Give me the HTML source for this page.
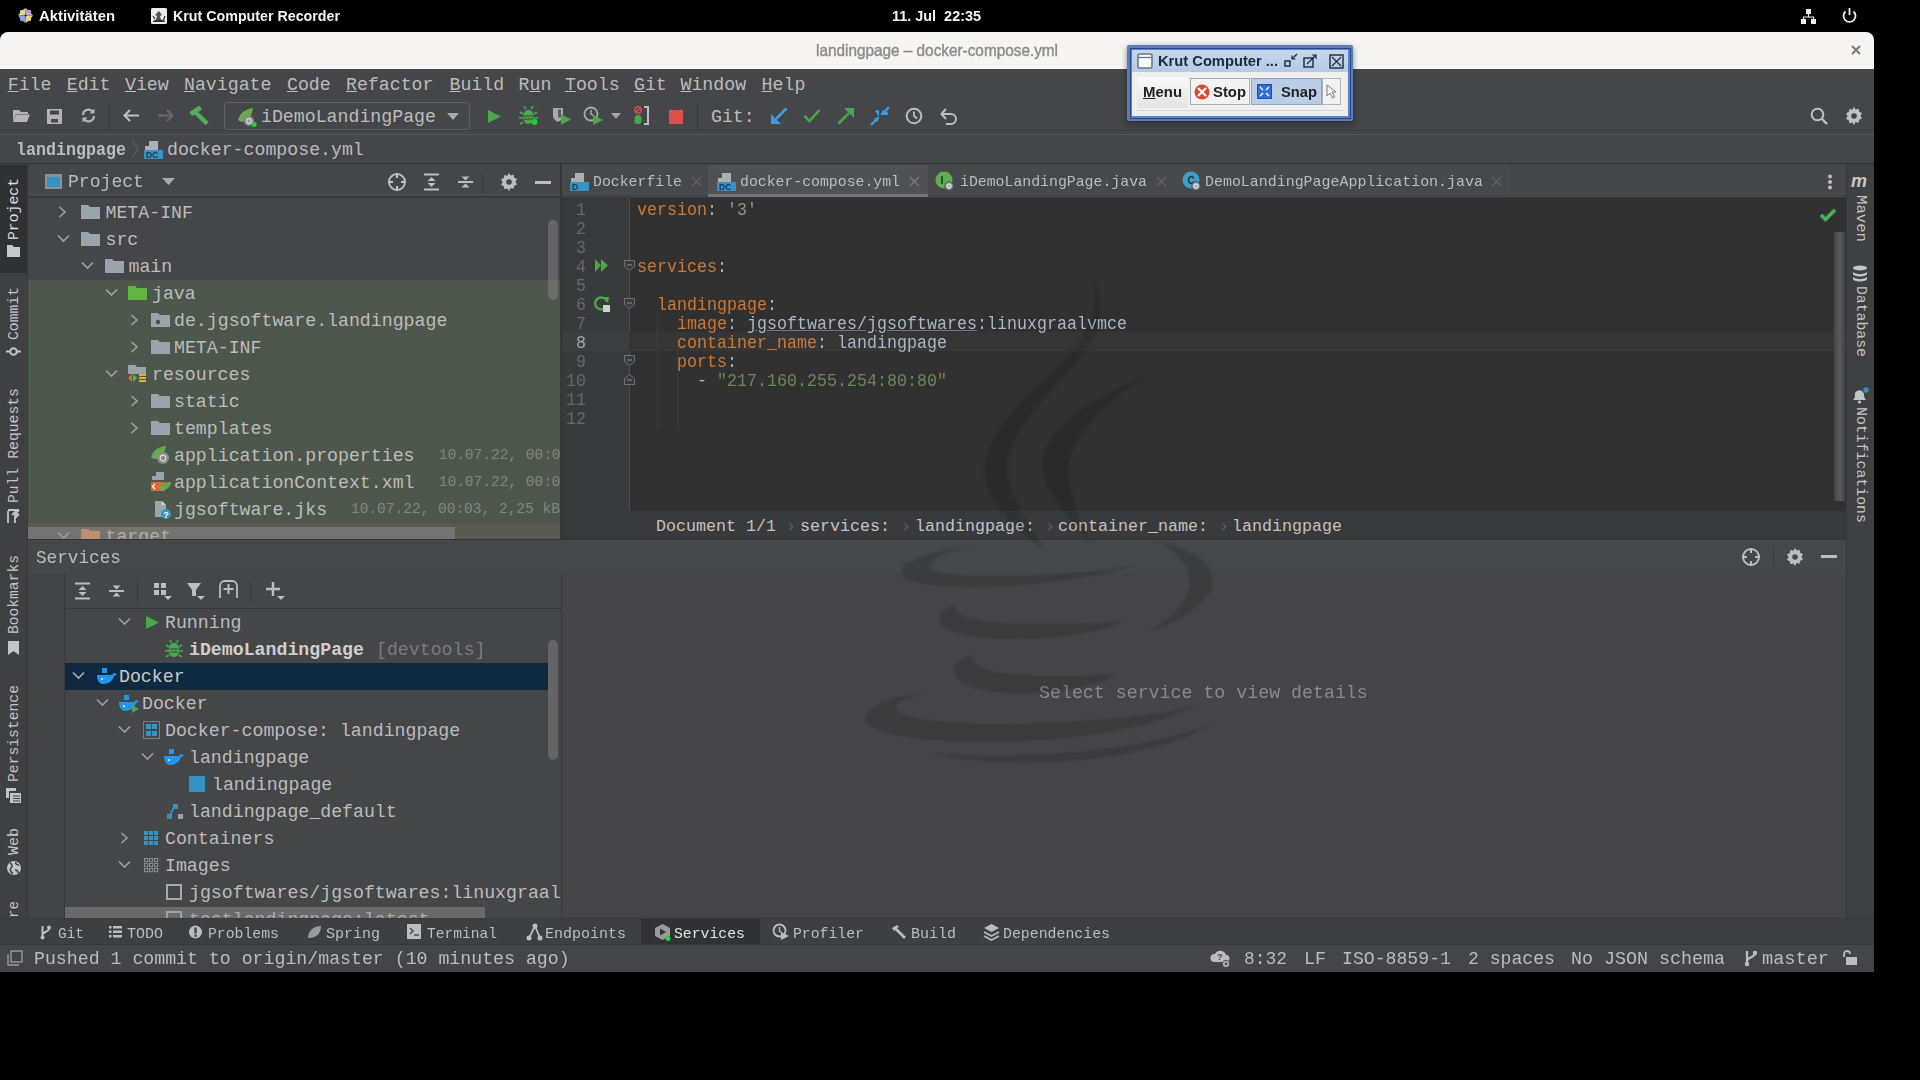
<!DOCTYPE html>
<html><head><meta charset="utf-8"><style>
html,body{margin:0;padding:0;}
body{width:1920px;height:1080px;background:#000;position:relative;overflow:hidden;font-family:"Liberation Mono",monospace;}
div{position:absolute;box-sizing:border-box;}
.t{white-space:pre;}
</style></head><body>
<div style="left:0px;top:0px;width:1920px;height:32px;background:#000;"></div>
<svg style="position:absolute;left:17px;top:7px;" width="17" height="17" viewBox="0 0 17 17"><g transform="translate(8.5 8.5)"><path d="M0.00 0.00 L0.00 -7.50 L2.37 -5.73 L5.30 -5.30 L5.73 -2.37 L7.50 0.00Z" fill="#c49ae0"/><path d="M0.00 0.00 L-7.50 0.00 L-5.73 -2.37 L-5.30 -5.30 L-2.37 -5.73 L-0.00 -7.50Z" fill="#d6dc80"/><path d="M0.00 0.00 L0.00 7.50 L-2.37 5.73 L-5.30 5.30 L-5.73 2.37 L-7.50 0.00Z" fill="#9a9ae6"/><path d="M0.00 0.00 L7.50 0.00 L5.73 2.37 L5.30 5.30 L2.37 5.73 L0.00 7.50Z" fill="#e6d672"/><circle r="0.9" fill="#000"/></g></svg>
<div class="t" style="left:39px;top:6.00px;font-size:15px;line-height:20px;color:#f2f2f2;font-family:'Liberation Sans', sans-serif;font-weight:bold;transform:scaleX(0.9912);transform-origin:0 0;">Aktivitäten</div>
<svg style="position:absolute;left:151px;top:8px;" width="16" height="16" viewBox="0 0 16 16"><rect x="0" y="0" width="16" height="16" rx="1.5" fill="#ececec"/><path d="M8 3l3 4-2 1 1 4H5l1-4-2-1Z" fill="#555"/><path d="M2 13c3-2 9-2 12 0v1H2Z" fill="#333"/><path d="M2 8l2 3M14 8l-1.5 4" stroke="#222" stroke-width="1.2"/></svg>
<div class="t" style="left:173px;top:6.00px;font-size:15px;line-height:20px;color:#f2f2f2;font-family:'Liberation Sans', sans-serif;font-weight:bold;transform:scaleX(0.9497);transform-origin:0 0;">Krut Computer Recorder</div>
<div class="t" style="left:892px;top:6.00px;font-size:15px;line-height:20px;color:#f2f2f2;font-family:'Liberation Sans', sans-serif;font-weight:bold;transform:scaleX(0.9616);transform-origin:0 0;">11. Jul  22:35</div>
<svg style="position:absolute;left:1800px;top:8px;" width="17" height="17" viewBox="0 0 17 17"><rect x="6" y="1" width="5" height="5" fill="#eee"/><rect x="1" y="11" width="5" height="5" fill="#eee"/><rect x="11" y="11" width="5" height="5" fill="#eee"/><path d="M8.5 6v3M3.5 11V9h10v2" stroke="#eee" stroke-width="1.2" fill="none"/></svg>
<svg style="position:absolute;left:1841px;top:7px;" width="17" height="17" viewBox="0 0 17 17"><path d="M4.5 4.5 A6 6 0 1 0 12.5 4.5" stroke="#eee" stroke-width="1.8" fill="none"/><path d="M8.5 1v7" stroke="#eee" stroke-width="1.8"/></svg>
<div style="left:0px;top:32px;width:1874px;height:37px;background:#f6f5f4;border-radius:8px 8px 0 0;"></div>
<div class="t" style="left:816px;top:39.50px;font-size:16.5px;line-height:21px;color:#8c8c8c;font-family:'Liberation Sans', sans-serif;-webkit-text-stroke:0.45px #8c8c8c;transform:scaleX(0.9291);transform-origin:0 0;">landingpage – docker-compose.yml</div>
<svg style="position:absolute;left:1851px;top:45px;" width="10" height="10" viewBox="0 0 10 10"><path d="M1 1L9 9M9 1L1 9" stroke="#7a7a7a" stroke-width="2"/></svg>
<div style="left:0px;top:69px;width:1874px;height:903px;background:#454649;"></div>
<div class="t" style="left:7.7px;top:73.00px;font-size:18.23px;line-height:24px;color:#bcbcbc;font-family:'Liberation Mono', monospace;"><u>F</u>ile</div>
<div class="t" style="left:66.7px;top:73.00px;font-size:18.23px;line-height:24px;color:#bcbcbc;font-family:'Liberation Mono', monospace;"><u>E</u>dit</div>
<div class="t" style="left:125px;top:73.00px;font-size:18.23px;line-height:24px;color:#bcbcbc;font-family:'Liberation Mono', monospace;"><u>V</u>iew</div>
<div class="t" style="left:184px;top:73.00px;font-size:18.23px;line-height:24px;color:#bcbcbc;font-family:'Liberation Mono', monospace;"><u>N</u>avigate</div>
<div class="t" style="left:287px;top:73.00px;font-size:18.23px;line-height:24px;color:#bcbcbc;font-family:'Liberation Mono', monospace;"><u>C</u>ode</div>
<div class="t" style="left:346px;top:73.00px;font-size:18.23px;line-height:24px;color:#bcbcbc;font-family:'Liberation Mono', monospace;"><u>R</u>efactor</div>
<div class="t" style="left:449.5px;top:73.00px;font-size:18.23px;line-height:24px;color:#bcbcbc;font-family:'Liberation Mono', monospace;"><u>B</u>uild</div>
<div class="t" style="left:518.6px;top:73.00px;font-size:18.23px;line-height:24px;color:#bcbcbc;font-family:'Liberation Mono', monospace;">R<u>u</u>n</div>
<div class="t" style="left:565px;top:73.00px;font-size:18.23px;line-height:24px;color:#bcbcbc;font-family:'Liberation Mono', monospace;"><u>T</u>ools</div>
<div class="t" style="left:634px;top:73.00px;font-size:18.23px;line-height:24px;color:#bcbcbc;font-family:'Liberation Mono', monospace;"><u>G</u>it</div>
<div class="t" style="left:680.5px;top:73.00px;font-size:18.23px;line-height:24px;color:#bcbcbc;font-family:'Liberation Mono', monospace;"><u>W</u>indow</div>
<div class="t" style="left:761.6px;top:73.00px;font-size:18.23px;line-height:24px;color:#bcbcbc;font-family:'Liberation Mono', monospace;"><u>H</u>elp</div>
<div style="left:0px;top:130px;width:1874px;height:1px;background:#3b3c3e;"></div>
<div style="left:0px;top:134px;width:1874px;height:1px;background:#535456;"></div>
<div style="left:0px;top:163px;width:1874px;height:2px;background:#323335;"></div>
<svg style="position:absolute;left:12px;top:108px;" width="19" height="15" viewBox="0 0 19 15"><path d="M1 2h6l2 2h7v2H4L1 13Z" fill="#b4b4b4"/><path d="M4 6.5h14l-3 7.5H1Z" fill="#b4b4b4"/></svg>
<svg style="position:absolute;left:46px;top:108px;" width="17" height="16" viewBox="0 0 17 16"><path d="M1 1h15v15H1Z" fill="#b4b4b4"/><rect x="4" y="2.5" width="9" height="4" fill="#454649"/><rect x="5" y="11" width="7" height="3.5" fill="#454649"/></svg>
<svg style="position:absolute;left:80px;top:107px;" width="17" height="17" viewBox="0 0 17 17"><path d="M3 8a5.5 5.5 0 0 1 10-3M14 9a5.5 5.5 0 0 1-10 3" stroke="#b4b4b4" stroke-width="2.2" fill="none"/><path d="M14.5 1.5v5h-5Z M2.5 15.5v-5h5Z" fill="#b4b4b4"/></svg>
<div style="left:109px;top:104px;width:1px;height:26px;background:#3a3b3d;"></div>
<svg style="position:absolute;left:122px;top:108px;" width="18" height="15" viewBox="0 0 18 15"><path d="M17 7.5H3M8 2L2.5 7.5L8 13" stroke="#c0c0c0" stroke-width="2" fill="none"/></svg>
<svg style="position:absolute;left:157px;top:108px;" width="18" height="15" viewBox="0 0 18 15"><path d="M1 7.5h14M10 2l5.5 5.5L10 13" stroke="#6a6b6d" stroke-width="2" fill="none"/></svg>
<svg style="position:absolute;left:188px;top:104px;" width="22" height="22" viewBox="0 0 22 22"><path d="M2.8 10L12.6 3.5" stroke="#55ad5e" stroke-width="4.6"/><path d="M7 8L19.2 19.6" stroke="#55ad5e" stroke-width="4.4"/></svg>
<div style="left:224px;top:102px;width:246px;height:28px;background:transparent;border:1.5px solid #606163;border-radius:4px;"></div>
<svg style="position:absolute;left:236px;top:106px;" width="22" height="21" viewBox="0 0 22 21"><path d="M2 14c2-7 7-11 15-12-1 8-5 13-12 14Z" fill="#6aa84f"/><circle cx="13" cy="15" r="5" fill="#8c8c8c"/><circle cx="13" cy="15" r="2.3" fill="none" stroke="#ddd" stroke-width="1.2"/><circle cx="18" cy="18.5" r="2.5" fill="#25d03d"/></svg>
<div class="t" style="left:261px;top:105.00px;font-size:18.23px;line-height:24px;color:#bcbcbc;font-family:'Liberation Mono', monospace;">iDemoLandingPage</div>
<svg style="position:absolute;left:447px;top:113px;" width="12" height="7" viewBox="0 0 12 7"><path d="M0 0h12L6 7Z" fill="#a9a9a9"/></svg>
<svg style="position:absolute;left:487px;top:109px;" width="14" height="15" viewBox="0 0 14 15"><path d="M1 1l13 6.5L1 14Z" fill="#4aa74e"/></svg>
<svg style="position:absolute;left:519px;top:106px;" width="19" height="19" viewBox="0 0 19 19"><path d="M9.5 4a5 5 0 0 1 5 5v4a5 5 0 0 1-10 0V9a5 5 0 0 1 5-5Z" fill="#4aa74e"/><path d="M4 8l-3-2M15 8l3-2M4 12H0M15 12h4M4 16l-3 2M15 16l3 2M7 3L5 0M12 3l2-3" stroke="#4aa74e" stroke-width="1.6"/><path d="M5 10h9M5 13h9" stroke="#3c3c3c" stroke-width="1.2"/><circle cx="15.5" cy="16" r="3" fill="#22c93a"/></svg>
<svg style="position:absolute;left:551px;top:106px;" width="21" height="19" viewBox="0 0 21 19"><path d="M2 2h10v7c0 4-3 6-5 7-2-1-5-3-5-7Z" fill="#a9a9a9"/><path d="M7 3.5h3v8H7Z" fill="#5a5a5a"/><path d="M10 8l10 5.5L10 19Z" fill="#4aa74e"/></svg>
<svg style="position:absolute;left:583px;top:106px;" width="21" height="19" viewBox="0 0 21 19"><circle cx="8" cy="8" r="6.5" stroke="#a9a9a9" stroke-width="1.8" fill="none"/><path d="M8 4v4l3 2" stroke="#a9a9a9" stroke-width="1.5" fill="none"/><path d="M10 9l10 5L10 19Z" fill="#4aa74e"/></svg>
<svg style="position:absolute;left:611px;top:113px;" width="10" height="6" viewBox="0 0 10 6"><path d="M0 0h10L5 6Z" fill="#a9a9a9"/></svg>
<svg style="position:absolute;left:633px;top:106px;" width="18" height="19" viewBox="0 0 18 19"><circle cx="5" cy="4" r="3.3" stroke="#e05252" stroke-width="1.3" fill="none"/><path d="M2.5 6.5L7.5 1.5" stroke="#e05252" stroke-width="1.2"/><path d="M5 9a3.5 3.5 0 0 1 3.5 3.5v2a3.5 3.5 0 0 1-7 0v-2A3.5 3.5 0 0 1 5 9Z" fill="#4aa74e"/><path d="M11 1h4v17h-4" stroke="#bdbdbd" stroke-width="2" fill="none"/></svg>
<svg style="position:absolute;left:669px;top:110px;" width="14" height="14" viewBox="0 0 14 14"><rect width="14" height="14" fill="#e04f4f"/></svg>
<div style="left:697px;top:104px;width:1px;height:26px;background:#3a3b3d;"></div>
<div class="t" style="left:711px;top:105.00px;font-size:18.23px;line-height:24px;color:#bcbcbc;font-family:'Liberation Mono', monospace;">Git:</div>
<svg style="position:absolute;left:770px;top:107px;" width="18" height="18" viewBox="0 0 18 18"><path d="M16.5 1.5L6 12" stroke="#3a9de0" stroke-width="2.6"/><path d="M1 17V7l10 10Z" fill="#3a9de0"/></svg>
<svg style="position:absolute;left:803px;top:108px;" width="18" height="15" viewBox="0 0 18 15"><path d="M1.5 8l5 5L16.5 2" stroke="#4aa74e" stroke-width="2.6" fill="none"/></svg>
<svg style="position:absolute;left:837px;top:107px;" width="18" height="18" viewBox="0 0 18 18"><path d="M1.5 16.5L12 6" stroke="#4aa74e" stroke-width="2.6"/><path d="M17 1v10L7 1Z" fill="#4aa74e"/></svg>
<svg style="position:absolute;left:870px;top:106px;" width="20" height="20" viewBox="0 0 20 20"><path d="M19 1l-6 6M1 19l6-6" stroke="#3a9de0" stroke-width="2.4"/><path d="M9 11V4l-4 .5Z M11 9h7l-.5-4Z" fill="#3a9de0"/><path d="M9.5 10.5L4 12.5 7.5 16Z M10.5 9.5l2-5.5L16 7.5Z" fill="#3a9de0"/></svg>
<svg style="position:absolute;left:905px;top:107px;" width="18" height="18" viewBox="0 0 18 18"><circle cx="9" cy="9" r="7.3" stroke="#bdbdbd" stroke-width="2" fill="none"/><path d="M9 4.5V9l3 2.5" stroke="#bdbdbd" stroke-width="1.8" fill="none"/></svg>
<svg style="position:absolute;left:940px;top:107px;" width="18" height="18" viewBox="0 0 18 18"><path d="M2 7h9a5 5 0 0 1 0 10H6" stroke="#bdbdbd" stroke-width="2" fill="none"/><path d="M6 2L1.5 7L6 12" stroke="#bdbdbd" stroke-width="2" fill="none"/></svg>
<svg style="position:absolute;left:1810px;top:107px;" width="18" height="18" viewBox="0 0 18 18"><circle cx="7.5" cy="7.5" r="5.8" stroke="#c0c0c0" stroke-width="2" fill="none"/><path d="M11.5 11.5L17 17" stroke="#c0c0c0" stroke-width="2.4"/></svg>
<svg style="position:absolute;left:1845px;top:107px;" width="18" height="18" viewBox="0 0 18 18"><path d="M9 0l1.6 2.6 3-.8.6 3 2.8 1.3-1.5 2.7 1.5 2.7-2.8 1.3-.6 3-3-.8L9 18l-1.6-2.6-3 .8-.6-3L1 11.9 2.5 9 1 6.3l2.8-1.3.6-3 3 .8Z" fill="#c0c0c0"/><circle cx="9" cy="9" r="2.8" fill="#454649"/></svg>
<div class="t" style="left:15.5px;top:138.00px;font-size:18.23px;line-height:24px;color:#bcbcbc;font-family:'Liberation Mono', monospace;font-weight:bold;transform:scaleX(0.9140);transform-origin:0 0;">landingpage</div>
<svg style="position:absolute;left:131px;top:139px;" width="8" height="20" viewBox="0 0 8 20"><path d="M1 1l6 9-6 9" stroke="#5a5b5d" stroke-width="1.2" fill="none"/></svg>
<svg style="position:absolute;left:144px;top:140px;" width="19" height="19" viewBox="0 0 19 19"><path d="M5 1h9v9H5Z" fill="#a9b1b7"/><path d="M1 6h6v4H1Z" fill="#a9b1b7"/><rect x="0" y="10" width="19" height="9" fill="#3592c4"/><text x="2" y="18" font-family="Liberation Sans" font-size="8.5" font-weight="bold" fill="#1d3d55">DC</text></svg>
<div class="t" style="left:167px;top:138.00px;font-size:18.23px;line-height:24px;color:#bcbcbc;font-family:'Liberation Mono', monospace;">docker-compose.yml</div>
<div style="left:0px;top:164px;width:28px;height:781px;background:#3e4042;"></div>
<div style="left:27px;top:164px;width:1px;height:781px;background:#38393b;"></div>
<div style="left:0px;top:165px;width:27px;height:108px;background:#2f3133;"></div>
<div class="t" style="left:13.5px;top:240px;font-size:14.8px;line-height:19px;color:#dedede;font-family:'Liberation Mono',monospace;transform-origin:0 0;transform:rotate(-90deg) scaleX(0.9972) translateY(-9.5px);">Project</div>
<svg style="position:absolute;left:6px;top:244px;" width="15" height="14" viewBox="0 0 15 14"><path d="M1 1h5l2 2h6v10H1Z" fill="#c8c8c8"/></svg>
<div class="t" style="left:13.5px;top:340px;font-size:14.8px;line-height:19px;color:#c4c4c4;font-family:'Liberation Mono',monospace;transform-origin:0 0;transform:rotate(-90deg) scaleX(0.9945) translateY(-9.5px);">Commit</div>
<svg style="position:absolute;left:6px;top:345px;" width="15" height="13" viewBox="0 0 15 13"><circle cx="7.5" cy="6.5" r="3.3" stroke="#c4c4c4" stroke-width="2" fill="none"/><path d="M0 6.5h4M11 6.5h4" stroke="#c4c4c4" stroke-width="2"/></svg>
<div class="t" style="left:13.5px;top:503px;font-size:14.8px;line-height:19px;color:#c4c4c4;font-family:'Liberation Mono',monospace;transform-origin:0 0;transform:rotate(-90deg) scaleX(0.9959) translateY(-9.5px);">Pull Requests</div>
<svg style="position:absolute;left:6px;top:509px;" width="15" height="15" viewBox="0 0 15 15"><path d="M2 14V2M2 1h11M9 5l4-4M9 9l4-4-4 4" stroke="#c4c4c4" stroke-width="1.8" fill="none"/><path d="M6 6l3-3 3 3M9 3v11" stroke="#c4c4c4" stroke-width="1.8" fill="none"/></svg>
<div class="t" style="left:13.5px;top:634px;font-size:14.8px;line-height:19px;color:#c4c4c4;font-family:'Liberation Mono',monospace;transform-origin:0 0;transform:rotate(-90deg) scaleX(0.9882) translateY(-9.5px);">Bookmarks</div>
<svg style="position:absolute;left:7px;top:640px;" width="13" height="16" viewBox="0 0 13 16"><path d="M1 1h11v14l-5.5-4L1 15Z" fill="#c4c4c4"/></svg>
<div class="t" style="left:13.5px;top:782px;font-size:14.8px;line-height:19px;color:#c4c4c4;font-family:'Liberation Mono',monospace;transform-origin:0 0;transform:rotate(-90deg) scaleX(0.9928) translateY(-9.5px);">Persistence</div>
<svg style="position:absolute;left:5px;top:787px;" width="17" height="17" viewBox="0 0 17 17"><path d="M1 1h10v3H4v7H1Z" fill="#c4c4c4"/><path d="M5 6h11v10H5Z" fill="#c4c4c4"/><path d="M8 9h7M8 11.5h7M8 14h7" stroke="#3e4042" stroke-width="1"/></svg>
<div class="t" style="left:13.5px;top:855px;font-size:14.8px;line-height:19px;color:#c4c4c4;font-family:'Liberation Mono',monospace;transform-origin:0 0;transform:rotate(-90deg) scaleX(1.0132) translateY(-9.5px);">Web</div>
<svg style="position:absolute;left:6px;top:860px;" width="16" height="16" viewBox="0 0 16 16"><circle cx="8" cy="8" r="7" fill="#c4c4c4"/><path d="M4 3c2 1 3 3 1 5s0 4 2 6M10 2c-1 2 1 3 3 3M9 10c2 0 3 1 3 3" stroke="#3e4042" stroke-width="1.6" fill="none"/></svg>
<div class="t" style="left:13.5px;top:918px;font-size:14.8px;line-height:19px;color:#c4c4c4;font-family:'Liberation Mono',monospace;transform-origin:0 0;transform:rotate(-90deg) scaleX(0.9570) translateY(-9.5px);">re</div>
<div style="left:1846px;top:164px;width:28px;height:781px;background:#3e4042;"></div>
<div style="left:1846px;top:164px;width:1px;height:781px;background:#38393b;"></div>
<div class="t" style="left:1851px;top:170px;font-size:18px;line-height:22px;color:#c8c8c8;font-family:'Liberation Sans',sans-serif;font-weight:bold;font-style:italic;">m</div>
<div class="t" style="left:1860px;top:195px;font-size:14.8px;line-height:19px;color:#c4c4c4;font-family:'Liberation Mono',monospace;transform-origin:0 0;transform:rotate(90deg) scaleX(1.0583) translateY(-9.5px);">Maven</div>
<svg style="position:absolute;left:1852px;top:265px;" width="16" height="18" viewBox="0 0 16 18"><ellipse cx="8" cy="3" rx="7" ry="2.5" fill="#c4c4c4"/><path d="M1 6.5c0 3.3 14 3.3 14 0v2.5c0 3.3-14 3.3-14 0Z M1 11.5c0 3.3 14 3.3 14 0v2.5c0 3.3-14 3.3-14 0Z" fill="#c4c4c4"/></svg>
<div class="t" style="left:1860px;top:286px;font-size:14.8px;line-height:19px;color:#c4c4c4;font-family:'Liberation Mono',monospace;transform-origin:0 0;transform:rotate(90deg) scaleX(0.9992) translateY(-9.5px);">Database</div>
<svg style="position:absolute;left:1851px;top:386px;" width="19" height="18" viewBox="0 0 19 18"><path d="M2 14c2-2 2-4 2-7a5 5 0 0 1 9 0c0 3 0 5 2 7Z" fill="#c4c4c4"/><circle cx="8.5" cy="16" r="1.6" fill="#c4c4c4"/><circle cx="15" cy="4" r="3.3" fill="#3592c4" stroke="#3e4042" stroke-width="1"/></svg>
<div class="t" style="left:1860px;top:407px;font-size:14.8px;line-height:19px;color:#c4c4c4;font-family:'Liberation Mono',monospace;transform-origin:0 0;transform:rotate(90deg) scaleX(1.0046) translateY(-9.5px);">Notifications</div>
<div style="left:28px;top:164px;width:533px;height:375px;background:#454649;"></div>
<div style="left:28px;top:194px;width:533px;height:1px;background:#4c4d4f;"></div>
<div style="left:28px;top:196px;width:533px;height:2px;background:#38393a;"></div>
<svg style="position:absolute;left:44px;top:173px;" width="19" height="17" viewBox="0 0 19 17"><rect x="1" y="1" width="17" height="15" fill="#8a9095"/><rect x="3" y="4" width="13" height="10" fill="#3592c4"/></svg>
<div class="t" style="left:68px;top:170.00px;font-size:18.23px;line-height:24px;color:#bcbcbc;font-family:'Liberation Mono', monospace;transform:scaleX(0.9923);transform-origin:0 0;">Project</div>
<svg style="position:absolute;left:162px;top:178px;" width="13" height="7" viewBox="0 0 13 7"><path d="M0 0h13L6.5 7Z" fill="#a9a9a9"/></svg>
<svg style="position:absolute;left:387px;top:172px;" width="20" height="20" viewBox="0 0 20 20"><circle cx="10" cy="10" r="8" stroke="#bdbdbd" stroke-width="2" fill="none"/><path d="M10 1v5M10 14v5M1 10h5M14 10h5" stroke="#bdbdbd" stroke-width="2"/></svg>
<svg style="position:absolute;left:423px;top:173px;" width="17" height="18" viewBox="0 0 17 18"><path d="M1 1.5h15M1 16.5h15" stroke="#bdbdbd" stroke-width="2"/><path d="M8.5 4l4 4h-8Z M8.5 14l4-4h-8Z" fill="#bdbdbd"/></svg>
<svg style="position:absolute;left:457px;top:173px;" width="17" height="18" viewBox="0 0 17 18"><path d="M1 9h15" stroke="#bdbdbd" stroke-width="2"/><path d="M8.5 7.5l4-4h-8Z M8.5 10.5l4 4h-8Z" fill="#bdbdbd"/></svg>
<div style="left:482px;top:172px;width:1px;height:21px;background:#3a3b3d;"></div>
<svg style="position:absolute;left:500px;top:173px;" width="18" height="18" viewBox="0 0 18 18"><path d="M9 0l1.6 2.6 3-.8.6 3 2.8 1.3-1.5 2.7 1.5 2.7-2.8 1.3-.6 3-3-.8L9 18l-1.6-2.6-3 .8-.6-3L1 11.9 2.5 9 1 6.3l2.8-1.3.6-3 3 .8Z" fill="#bdbdbd"/><circle cx="9" cy="9" r="2.8" fill="#454649"/></svg>
<div style="left:535px;top:181px;width:16px;height:2.5px;background:#bdbdbd;"></div>
<div style="left:28px;top:279.5px;width:532px;height:244px;background:#4e574c;"></div>
<div style="left:28px;top:523px;width:532px;height:16px;background:#5b5850;"></div>
<svg style="position:absolute;left:58px;top:205.8px;" width="9" height="12" viewBox="0 0 9 12"><path d="M1.5 1l5.5 5-5.5 5" stroke="#a0a0a0" stroke-width="1.6" fill="none"/></svg>
<svg style="position:absolute;left:81px;top:203.8px;" width="19" height="16" viewBox="0 0 19 16"><path d="M0 1h7l2 2h10v12H0Z" fill="#9aa4ad"/></svg>
<div class="t" style="left:105.5px;top:200.80px;font-size:18.23px;line-height:24px;color:#bcbcbc;font-family:'Liberation Mono', monospace;">META-INF</div>
<svg style="position:absolute;left:57px;top:233.8px;" width="13" height="9" viewBox="0 0 13 9"><path d="M1 1.5l5.5 5.5 5.5-5.5" stroke="#a0a0a0" stroke-width="1.6" fill="none"/></svg>
<svg style="position:absolute;left:81px;top:230.8px;" width="19" height="16" viewBox="0 0 19 16"><path d="M0 1h7l2 2h10v12H0Z" fill="#9aa4ad"/></svg>
<div class="t" style="left:105.5px;top:227.80px;font-size:18.23px;line-height:24px;color:#bcbcbc;font-family:'Liberation Mono', monospace;">src</div>
<svg style="position:absolute;left:81px;top:260.8px;" width="13" height="9" viewBox="0 0 13 9"><path d="M1 1.5l5.5 5.5 5.5-5.5" stroke="#a0a0a0" stroke-width="1.6" fill="none"/></svg>
<svg style="position:absolute;left:105px;top:257.8px;" width="19" height="16" viewBox="0 0 19 16"><path d="M0 1h7l2 2h10v12H0Z" fill="#9aa4ad"/></svg>
<div class="t" style="left:128.5px;top:254.80px;font-size:18.23px;line-height:24px;color:#bcbcbc;font-family:'Liberation Mono', monospace;">main</div>
<svg style="position:absolute;left:104.6px;top:287.8px;" width="13" height="9" viewBox="0 0 13 9"><path d="M1 1.5l5.5 5.5 5.5-5.5" stroke="#a0a0a0" stroke-width="1.6" fill="none"/></svg>
<svg style="position:absolute;left:128px;top:284.8px;" width="19" height="16" viewBox="0 0 19 16"><path d="M0 1h7l2 2h10v12H0Z" fill="#62b543"/></svg>
<div class="t" style="left:152px;top:281.80px;font-size:18.23px;line-height:24px;color:#bcbcbc;font-family:'Liberation Mono', monospace;">java</div>
<svg style="position:absolute;left:129.7px;top:313.8px;" width="9" height="12" viewBox="0 0 9 12"><path d="M1.5 1l5.5 5-5.5 5" stroke="#a0a0a0" stroke-width="1.6" fill="none"/></svg>
<svg style="position:absolute;left:151px;top:311.8px;" width="19" height="16" viewBox="0 0 19 16"><path d="M0 1h7l2 2h10v12H0Z" fill="#9aa4ad"/><circle cx="7" cy="10" r="2.2" fill="#4b4f52"/></svg>
<div class="t" style="left:174px;top:308.80px;font-size:18.23px;line-height:24px;color:#bcbcbc;font-family:'Liberation Mono', monospace;">de.jgsoftware.landingpage</div>
<svg style="position:absolute;left:129.7px;top:340.8px;" width="9" height="12" viewBox="0 0 9 12"><path d="M1.5 1l5.5 5-5.5 5" stroke="#a0a0a0" stroke-width="1.6" fill="none"/></svg>
<svg style="position:absolute;left:151px;top:338.8px;" width="19" height="16" viewBox="0 0 19 16"><path d="M0 1h7l2 2h10v12H0Z" fill="#9aa4ad"/></svg>
<div class="t" style="left:174px;top:335.80px;font-size:18.23px;line-height:24px;color:#bcbcbc;font-family:'Liberation Mono', monospace;">META-INF</div>
<svg style="position:absolute;left:104.6px;top:368.8px;" width="13" height="9" viewBox="0 0 13 9"><path d="M1 1.5l5.5 5.5 5.5-5.5" stroke="#a0a0a0" stroke-width="1.6" fill="none"/></svg>
<svg style="position:absolute;left:127px;top:363.8px;" width="21" height="20" viewBox="0 0 21 20"><path d="M1 1h7l2 2h9v7H1Z" fill="#9aa4ad"/><path d="M1 14l4-4v8Z" fill="#e5663b"/><path d="M6 10l4 4-4 4Z" fill="#62b543"/><path d="M12 11h7M12 14h7M12 17h7" stroke="#e0b234" stroke-width="1.8"/></svg>
<div class="t" style="left:152px;top:362.80px;font-size:18.23px;line-height:24px;color:#bcbcbc;font-family:'Liberation Mono', monospace;">resources</div>
<svg style="position:absolute;left:129.7px;top:394.8px;" width="9" height="12" viewBox="0 0 9 12"><path d="M1.5 1l5.5 5-5.5 5" stroke="#a0a0a0" stroke-width="1.6" fill="none"/></svg>
<svg style="position:absolute;left:151px;top:392.8px;" width="19" height="16" viewBox="0 0 19 16"><path d="M0 1h7l2 2h10v12H0Z" fill="#9aa4ad"/></svg>
<div class="t" style="left:174px;top:389.80px;font-size:18.23px;line-height:24px;color:#bcbcbc;font-family:'Liberation Mono', monospace;">static</div>
<svg style="position:absolute;left:129.7px;top:421.8px;" width="9" height="12" viewBox="0 0 9 12"><path d="M1.5 1l5.5 5-5.5 5" stroke="#a0a0a0" stroke-width="1.6" fill="none"/></svg>
<svg style="position:absolute;left:151px;top:419.8px;" width="19" height="16" viewBox="0 0 19 16"><path d="M0 1h7l2 2h10v12H0Z" fill="#9aa4ad"/></svg>
<div class="t" style="left:174px;top:416.80px;font-size:18.23px;line-height:24px;color:#bcbcbc;font-family:'Liberation Mono', monospace;">templates</div>
<svg style="position:absolute;left:150px;top:444.8px;" width="22" height="20" viewBox="0 0 22 20"><path d="M1 12c2-6 6-10 15-11-1 7-5 12-12 13Z" fill="#6aa84f"/><circle cx="13" cy="13" r="6" fill="#8c8c8c"/><circle cx="13" cy="13" r="2.8" fill="none" stroke="#ddd" stroke-width="1.2"/></svg>
<div class="t" style="left:174px;top:443.80px;font-size:18.23px;line-height:24px;color:#bcbcbc;font-family:'Liberation Mono', monospace;">application.properties</div>
<svg style="position:absolute;left:150px;top:470.8px;" width="22" height="22" viewBox="0 0 22 22"><path d="M6 1h8v8H6Z M2 5h5v4H2Z" fill="#9aa4ad"/><rect x="1" y="11" width="14" height="9" fill="#e5663b"/><path d="M5 13l-2.5 2.5L5 18" stroke="#fff" stroke-width="1.2" fill="none"/><path d="M9 19c1-6 5-8 12-8-1 6-5 9-12 8Z" fill="#6aa84f"/></svg>
<div class="t" style="left:174px;top:470.80px;font-size:18.23px;line-height:24px;color:#bcbcbc;font-family:'Liberation Mono', monospace;">applicationContext.xml</div>
<svg style="position:absolute;left:151px;top:497.8px;" width="22" height="22" viewBox="0 0 22 22"><path d="M4 3h7v4h4v12H4Z" fill="#9aa4ad"/><path d="M11 3l4 4h-4Z" fill="#d0d6db"/><circle cx="15" cy="16" r="5" fill="#3592c4"/><text x="12.3" y="20" font-family="Liberation Sans" font-size="9" font-weight="bold" fill="#fff">?</text></svg>
<div class="t" style="left:174px;top:497.80px;font-size:18.23px;line-height:24px;color:#bcbcbc;font-family:'Liberation Mono', monospace;">jgsoftware.jks</div>
<svg style="position:absolute;left:57px;top:530.8px;" width="13" height="9" viewBox="0 0 13 9"><path d="M1 1.5l5.5 5.5 5.5-5.5" stroke="#a0a0a0" stroke-width="1.6" fill="none"/></svg>
<svg style="position:absolute;left:81px;top:527.8px;" width="19" height="16" viewBox="0 0 19 16"><path d="M0 1h7l2 2h10v12H0Z" fill="#e0874d"/></svg>
<div class="t" style="left:105.5px;top:524.80px;font-size:18.23px;line-height:24px;color:#c9c0b0;font-family:'Liberation Mono', monospace;">target</div>
<div class="t" style="left:438.75px;top:446.30px;font-size:14.5px;line-height:19px;color:#80867e;font-family:'Liberation Mono', monospace;">10.07.22, 00:0</div>
<div class="t" style="left:438.75px;top:473.30px;font-size:14.5px;line-height:19px;color:#80867e;font-family:'Liberation Mono', monospace;">10.07.22, 00:0</div>
<div class="t" style="left:351px;top:500.30px;font-size:14.5px;line-height:19px;color:#80867e;font-family:'Liberation Mono', monospace;">10.07.22, 00:03, 2,25 kB</div>
<div style="left:28px;top:527px;width:427px;height:12px;background:rgba(150,150,150,0.45);"></div>
<div style="left:548px;top:220px;width:10px;height:80px;background:rgba(140,140,140,0.45);border-radius:5px;"></div>
<div style="left:560px;top:164px;width:2px;height:375px;background:#38393b;"></div>
<div style="left:561px;top:164px;width:1285px;height:34px;background:#454649;"></div>
<div style="left:562px;top:165px;width:947px;height:29px;background:#47484a;"></div>
<div style="left:562px;top:193px;width:1284px;height:1px;background:#4d4e50;"></div>
<div style="left:561px;top:164px;width:1px;height:375px;background:#323335;"></div>
<div style="left:708px;top:165px;width:220px;height:33px;background:#4f5153;"></div>
<div style="left:708px;top:194px;width:220px;height:4px;background:#74777a;"></div>
<div style="left:561px;top:197px;width:1285px;height:1px;background:#38393b;"></div>
<svg style="position:absolute;left:570px;top:172px;" width="19" height="19" viewBox="0 0 19 19"><path d="M5 1h9v9H5Z" fill="#a9b1b7"/><path d="M1 6h6v4H1Z" fill="#a9b1b7"/><rect x="0" y="10" width="19" height="9" fill="#3592c4"/><text x="2" y="18" font-family="Liberation Sans" font-size="8.5" font-weight="bold" fill="#1d3d55">D</text></svg>
<div class="t" style="left:593px;top:172.50px;font-size:14.8px;line-height:19px;color:#bcbcbc;font-family:'Liberation Mono', monospace;transform:scaleX(1.0020);transform-origin:0 0;">Dockerfile</div>
<svg style="position:absolute;left:691px;top:175.5px;" width="11" height="11" viewBox="0 0 11 11"><path d="M1 1l9 9M10 1l-9 9" stroke="#5f6163" stroke-width="1.4"/></svg>
<svg style="position:absolute;left:717px;top:172px;" width="19" height="19" viewBox="0 0 19 19"><path d="M5 1h9v9H5Z" fill="#a9b1b7"/><path d="M1 6h6v4H1Z" fill="#a9b1b7"/><rect x="0" y="10" width="19" height="9" fill="#3592c4"/><text x="2" y="18" font-family="Liberation Sans" font-size="8.5" font-weight="bold" fill="#1d3d55">DC</text></svg>
<div class="t" style="left:740px;top:172.50px;font-size:14.8px;line-height:19px;color:#bcbcbc;font-family:'Liberation Mono', monospace;transform:scaleX(1.0007);transform-origin:0 0;">docker-compose.yml</div>
<svg style="position:absolute;left:909px;top:175.5px;" width="11" height="11" viewBox="0 0 11 11"><path d="M1 1l9 9M10 1l-9 9" stroke="#777a7c" stroke-width="1.4"/></svg>
<svg style="position:absolute;left:935px;top:171px;" width="20" height="20" viewBox="0 0 20 20"><circle cx="9" cy="9" r="8.5" fill="#5fae4f"/><text x="5.5" y="13" font-family="Liberation Sans" font-size="10" font-weight="bold" fill="#263238">I</text><circle cx="14" cy="15" r="4.2" fill="#9aa7ad" stroke="#4a4c4e" stroke-width="1"/><circle cx="14" cy="15" r="2" fill="none" stroke="#eee" stroke-width=".9"/></svg>
<div class="t" style="left:960px;top:172.50px;font-size:14.8px;line-height:19px;color:#bcbcbc;font-family:'Liberation Mono', monospace;transform:scaleX(1.0025);transform-origin:0 0;">iDemoLandingPage.java</div>
<svg style="position:absolute;left:1156px;top:175.5px;" width="11" height="11" viewBox="0 0 11 11"><path d="M1 1l9 9M10 1l-9 9" stroke="#5f6163" stroke-width="1.4"/></svg>
<svg style="position:absolute;left:1182px;top:171px;" width="20" height="20" viewBox="0 0 20 20"><circle cx="9" cy="9" r="8.5" fill="#3d9fc9"/><text x="5.5" y="13" font-family="Liberation Sans" font-size="10" font-weight="bold" fill="#263238">C</text><circle cx="14" cy="15" r="4.2" fill="#9aa7ad" stroke="#4a4c4e" stroke-width="1"/><circle cx="14" cy="15" r="2" fill="none" stroke="#eee" stroke-width=".9"/></svg>
<div class="t" style="left:1205px;top:172.50px;font-size:14.8px;line-height:19px;color:#bcbcbc;font-family:'Liberation Mono', monospace;transform:scaleX(1.0096);transform-origin:0 0;">DemoLandingPageApplication.java</div>
<svg style="position:absolute;left:1491px;top:175.5px;" width="11" height="11" viewBox="0 0 11 11"><path d="M1 1l9 9M10 1l-9 9" stroke="#5f6163" stroke-width="1.4"/></svg>
<svg style="position:absolute;left:1827px;top:174px;" width="6" height="16" viewBox="0 0 6 16"><circle cx="3" cy="2.5" r="2" fill="#c0c0c0"/><circle cx="3" cy="8" r="2" fill="#c0c0c0"/><circle cx="3" cy="13.5" r="2" fill="#c0c0c0"/></svg>
<div style="left:562px;top:198px;width:1284px;height:313px;background:#313131;"></div>
<div style="left:562px;top:198px;width:67px;height:313px;background:#393a3c;"></div>
<div style="left:629px;top:198px;width:1px;height:313px;background:#4e4f51;"></div>
<div style="left:562px;top:332px;width:1284px;height:19px;background:#363636;"></div>
<div style="left:562px;top:332px;width:67px;height:19px;background:#3d3e40;"></div>
<div class="t" style="left:576px;top:199.10px;font-size:17.6px;line-height:23px;color:#65686b;font-family:'Liberation Mono', monospace;transform:scaleX(0.9467);transform-origin:0 0;">1</div>
<div class="t" style="left:576px;top:218.10px;font-size:17.6px;line-height:23px;color:#65686b;font-family:'Liberation Mono', monospace;transform:scaleX(0.9467);transform-origin:0 0;">2</div>
<div class="t" style="left:576px;top:237.10px;font-size:17.6px;line-height:23px;color:#65686b;font-family:'Liberation Mono', monospace;transform:scaleX(0.9467);transform-origin:0 0;">3</div>
<div class="t" style="left:576px;top:256.10px;font-size:17.6px;line-height:23px;color:#65686b;font-family:'Liberation Mono', monospace;transform:scaleX(0.9467);transform-origin:0 0;">4</div>
<div class="t" style="left:576px;top:275.10px;font-size:17.6px;line-height:23px;color:#65686b;font-family:'Liberation Mono', monospace;transform:scaleX(0.9467);transform-origin:0 0;">5</div>
<div class="t" style="left:576px;top:294.10px;font-size:17.6px;line-height:23px;color:#65686b;font-family:'Liberation Mono', monospace;transform:scaleX(0.9467);transform-origin:0 0;">6</div>
<div class="t" style="left:576px;top:313.10px;font-size:17.6px;line-height:23px;color:#65686b;font-family:'Liberation Mono', monospace;transform:scaleX(0.9467);transform-origin:0 0;">7</div>
<div class="t" style="left:576px;top:332.10px;font-size:17.6px;line-height:23px;color:#a8a8a8;font-family:'Liberation Mono', monospace;transform:scaleX(0.9467);transform-origin:0 0;">8</div>
<div class="t" style="left:576px;top:351.10px;font-size:17.6px;line-height:23px;color:#65686b;font-family:'Liberation Mono', monospace;transform:scaleX(0.9467);transform-origin:0 0;">9</div>
<div class="t" style="left:566px;top:370.10px;font-size:17.6px;line-height:23px;color:#65686b;font-family:'Liberation Mono', monospace;transform:scaleX(0.9467);transform-origin:0 0;">10</div>
<div class="t" style="left:566px;top:389.10px;font-size:17.6px;line-height:23px;color:#65686b;font-family:'Liberation Mono', monospace;transform:scaleX(0.9467);transform-origin:0 0;">11</div>
<div class="t" style="left:566px;top:408.10px;font-size:17.6px;line-height:23px;color:#65686b;font-family:'Liberation Mono', monospace;transform:scaleX(0.9467);transform-origin:0 0;">12</div>
<div style="left:657px;top:313px;width:1px;height:114px;background:#3b3b3b;"></div>
<div style="left:677px;top:332px;width:1px;height:95px;background:#3b3b3b;"></div>
<div class="t" style="left:637px;top:199.10px;font-size:17.6px;line-height:23px;color:#cc7832;font-family:'Liberation Mono', monospace;transform:scaleX(0.9467);transform-origin:0 0;">version</div>
<div class="t" style="left:707px;top:199.10px;font-size:17.6px;line-height:23px;color:#a9b7c6;font-family:'Liberation Mono', monospace;transform:scaleX(0.9467);transform-origin:0 0;">: </div>
<div class="t" style="left:727px;top:199.10px;font-size:17.6px;line-height:23px;color:#8a9a7e;font-family:'Liberation Mono', monospace;transform:scaleX(0.9467);transform-origin:0 0;">&#x27;3&#x27;</div>
<div class="t" style="left:637px;top:256.10px;font-size:17.6px;line-height:23px;color:#cc7832;font-family:'Liberation Mono', monospace;transform:scaleX(0.9467);transform-origin:0 0;">services</div>
<div class="t" style="left:717px;top:256.10px;font-size:17.6px;line-height:23px;color:#a9b7c6;font-family:'Liberation Mono', monospace;transform:scaleX(0.9467);transform-origin:0 0;">:</div>
<div class="t" style="left:657px;top:294.10px;font-size:17.6px;line-height:23px;color:#cc7832;font-family:'Liberation Mono', monospace;transform:scaleX(0.9467);transform-origin:0 0;">landingpage</div>
<div class="t" style="left:767px;top:294.10px;font-size:17.6px;line-height:23px;color:#a9b7c6;font-family:'Liberation Mono', monospace;transform:scaleX(0.9467);transform-origin:0 0;">:</div>
<div class="t" style="left:677px;top:313.10px;font-size:17.6px;line-height:23px;color:#cc7832;font-family:'Liberation Mono', monospace;transform:scaleX(0.9467);transform-origin:0 0;">image</div>
<div class="t" style="left:727px;top:313.10px;font-size:17.6px;line-height:23px;color:#a9b7c6;font-family:'Liberation Mono', monospace;transform:scaleX(0.9467);transform-origin:0 0;">: </div>
<div class="t" style="left:747px;top:313.10px;font-size:17.6px;line-height:23px;color:#a9b7c6;font-family:'Liberation Mono', monospace;text-decoration:underline;text-decoration-color:#6f7a85;transform:scaleX(0.9467);transform-origin:0 0;">jgsoftwares/jgsoftwares</div>
<div class="t" style="left:977px;top:313.10px;font-size:17.6px;line-height:23px;color:#a9b7c6;font-family:'Liberation Mono', monospace;transform:scaleX(0.9467);transform-origin:0 0;">:linuxgraalvmce</div>
<div class="t" style="left:677px;top:332.10px;font-size:17.6px;line-height:23px;color:#cc7832;font-family:'Liberation Mono', monospace;transform:scaleX(0.9467);transform-origin:0 0;">container_name</div>
<div class="t" style="left:817px;top:332.10px;font-size:17.6px;line-height:23px;color:#a9b7c6;font-family:'Liberation Mono', monospace;transform:scaleX(0.9467);transform-origin:0 0;">: </div>
<div class="t" style="left:837px;top:332.10px;font-size:17.6px;line-height:23px;color:#a9b7c6;font-family:'Liberation Mono', monospace;transform:scaleX(0.9467);transform-origin:0 0;">landingpage</div>
<div class="t" style="left:677px;top:351.10px;font-size:17.6px;line-height:23px;color:#cc7832;font-family:'Liberation Mono', monospace;transform:scaleX(0.9467);transform-origin:0 0;">ports</div>
<div class="t" style="left:727px;top:351.10px;font-size:17.6px;line-height:23px;color:#a9b7c6;font-family:'Liberation Mono', monospace;transform:scaleX(0.9467);transform-origin:0 0;">:</div>
<div class="t" style="left:697px;top:370.10px;font-size:17.6px;line-height:23px;color:#a9b7c6;font-family:'Liberation Mono', monospace;transform:scaleX(0.9467);transform-origin:0 0;">- </div>
<div class="t" style="left:717px;top:370.10px;font-size:17.6px;line-height:23px;color:#6a8759;font-family:'Liberation Mono', monospace;transform:scaleX(0.9467);transform-origin:0 0;">&quot;217.160.255.254:80:80&quot;</div>
<svg style="position:absolute;left:595px;top:259px;" width="13" height="13" viewBox="0 0 13 13"><path d="M0 0l6 6.5L0 13Z M6 0l7 6.5L6 13Z" fill="#4aa74e"/></svg>
<svg style="position:absolute;left:593px;top:295px;" width="18" height="18" viewBox="0 0 18 18"><path d="M14 7a6 6 0 1 0-2 6" stroke="#4aa74e" stroke-width="2.4" fill="none"/><path d="M10 2l6 0-1 6Z" fill="#4aa74e"/><rect x="10" y="10" width="7" height="7" fill="#d0d0d0"/></svg>
<svg style="position:absolute;left:623px;top:259.3px;" width="13" height="13" viewBox="0 0 13 13"><path d="M1.5 1.5h10v6l-5 4-5-4Z" stroke="#6e7072" stroke-width="1" fill="#393a3c"/><path d="M4 6h5" stroke="#8a8c8e" stroke-width="1"/></svg>
<svg style="position:absolute;left:623px;top:297.3px;" width="13" height="13" viewBox="0 0 13 13"><path d="M1.5 1.5h10v6l-5 4-5-4Z" stroke="#6e7072" stroke-width="1" fill="#393a3c"/><path d="M4 6h5" stroke="#8a8c8e" stroke-width="1"/></svg>
<svg style="position:absolute;left:623px;top:354.3px;" width="13" height="13" viewBox="0 0 13 13"><path d="M1.5 1.5h10v6l-5 4-5-4Z" stroke="#6e7072" stroke-width="1" fill="#393a3c"/><path d="M4 6h5" stroke="#8a8c8e" stroke-width="1"/></svg>
<svg style="position:absolute;left:623px;top:373.3px;" width="13" height="13" viewBox="0 0 13 13"><path d="M1.5 11.5h10v-6l-5-4-5 4Z" stroke="#6e7072" stroke-width="1" fill="#393a3c"/><path d="M4 7h5" stroke="#8a8c8e" stroke-width="1"/></svg>
<svg style="position:absolute;left:1819px;top:207px;" width="18" height="15" viewBox="0 0 18 15"><path d="M2 8l4.5 4.5L16 3" stroke="#2f6b3a" stroke-width="4.6" fill="none"/><path d="M2 8l4.5 4.5L16 3" stroke="#4fb062" stroke-width="3" fill="none"/></svg>
<div style="left:1834px;top:232px;width:11px;height:269px;background:#49494a;"></div>
<div style="left:1837px;top:232px;width:5px;height:269px;background:#555657;"></div>
<div style="left:562px;top:511px;width:1284px;height:28px;background:#393a3c;"></div>
<div class="t" style="left:656px;top:515.50px;font-size:16.67px;line-height:22px;color:#c2c2c2;font-family:'Liberation Mono', monospace;">Document 1/1</div>
<div class="t" style="left:786px;top:515.50px;font-size:16.67px;line-height:22px;color:#5f6163;font-family:'Liberation Mono', monospace;">›</div>
<div class="t" style="left:800px;top:515.50px;font-size:16.67px;line-height:22px;color:#c2c2c2;font-family:'Liberation Mono', monospace;">services:</div>
<div class="t" style="left:901px;top:515.50px;font-size:16.67px;line-height:22px;color:#5f6163;font-family:'Liberation Mono', monospace;">›</div>
<div class="t" style="left:915px;top:515.50px;font-size:16.67px;line-height:22px;color:#c2c2c2;font-family:'Liberation Mono', monospace;">landingpage:</div>
<div class="t" style="left:1045px;top:515.50px;font-size:16.67px;line-height:22px;color:#5f6163;font-family:'Liberation Mono', monospace;">›</div>
<div class="t" style="left:1058px;top:515.50px;font-size:16.67px;line-height:22px;color:#c2c2c2;font-family:'Liberation Mono', monospace;">container_name:</div>
<div class="t" style="left:1219px;top:515.50px;font-size:16.67px;line-height:22px;color:#5f6163;font-family:'Liberation Mono', monospace;">›</div>
<div class="t" style="left:1232px;top:515.50px;font-size:16.67px;line-height:22px;color:#c2c2c2;font-family:'Liberation Mono', monospace;">landingpage</div>
<div style="left:28px;top:539px;width:1818px;height:34px;background:#464749;"></div>
<div style="left:28px;top:539px;width:1818px;height:1px;background:#333436;"></div>
<div style="left:28px;top:573px;width:1818px;height:1px;background:#38393b;"></div>
<div class="t" style="left:36px;top:546.00px;font-size:18.23px;line-height:24px;color:#bcbcbc;font-family:'Liberation Mono', monospace;transform:scaleX(0.9711);transform-origin:0 0;">Services</div>
<svg style="position:absolute;left:1741px;top:547px;" width="20" height="20" viewBox="0 0 20 20"><circle cx="10" cy="10" r="8" stroke="#bdbdbd" stroke-width="2" fill="none"/><path d="M10 1v5M10 14v5M1 10h5M14 10h5" stroke="#bdbdbd" stroke-width="2"/></svg>
<div style="left:1773px;top:547px;width:1px;height:19px;background:#3a3b3d;"></div>
<svg style="position:absolute;left:1786px;top:548px;" width="18" height="18" viewBox="0 0 18 18"><path d="M9 0l1.6 2.6 3-.8.6 3 2.8 1.3-1.5 2.7 1.5 2.7-2.8 1.3-.6 3-3-.8L9 18l-1.6-2.6-3 .8-.6-3L1 11.9 2.5 9 1 6.3l2.8-1.3.6-3 3 .8Z" fill="#bdbdbd"/><circle cx="9" cy="9" r="2.8" fill="#464749"/></svg>
<div style="left:1821px;top:555px;width:16px;height:2.5px;background:#bdbdbd;"></div>
<div style="left:28px;top:573px;width:1818px;height:346px;background:#454648;"></div>
<div style="left:28px;top:573px;width:36px;height:346px;background:#434446;"></div>
<div style="left:64px;top:573px;width:1px;height:346px;background:#38393b;"></div>
<div style="left:65px;top:608px;width:496px;height:1px;background:#38393b;"></div>
<div style="left:561px;top:573px;width:1px;height:346px;background:#38393b;"></div>
<svg style="position:absolute;left:74px;top:582px;" width="17" height="18" viewBox="0 0 17 18"><path d="M1 1.5h15M1 16.5h15" stroke="#bdbdbd" stroke-width="2"/><path d="M8.5 4l4 4h-8Z M8.5 14l4-4h-8Z" fill="#bdbdbd"/></svg>
<svg style="position:absolute;left:108px;top:582px;" width="17" height="18" viewBox="0 0 17 18"><path d="M1 9h15" stroke="#bdbdbd" stroke-width="2"/><path d="M8.5 7.5l4-4h-8Z M8.5 10.5l4 4h-8Z" fill="#bdbdbd"/></svg>
<div style="left:137px;top:580px;width:1px;height:22px;background:#3a3b3d;"></div>
<svg style="position:absolute;left:153px;top:582px;" width="19" height="19" viewBox="0 0 19 19"><rect x="1" y="1" width="5" height="5" fill="#bdbdbd"/><rect x="8" y="1" width="5" height="5" fill="#bdbdbd"/><rect x="1" y="8" width="5" height="5" fill="#bdbdbd"/><rect x="8" y="8" width="5" height="5" fill="#bdbdbd"/><path d="M11 14h8l-4 4Z" fill="#bdbdbd"/></svg>
<svg style="position:absolute;left:186px;top:582px;" width="19" height="19" viewBox="0 0 19 19"><path d="M1 1h14l-5 7v6H6V8Z" fill="#bdbdbd"/><path d="M11 14h8l-4 4Z" fill="#bdbdbd"/></svg>
<svg style="position:absolute;left:218px;top:580px;" width="21" height="21" viewBox="0 0 21 21"><path d="M2 18V6a5 5 0 0 1 5-5h7a5 5 0 0 1 5 5v12" stroke="#bdbdbd" stroke-width="1.8" fill="none"/><path d="M10.5 4v10M5.5 9h10" stroke="#bdbdbd" stroke-width="2"/></svg>
<div style="left:250px;top:580px;width:1px;height:22px;background:#3a3b3d;"></div>
<svg style="position:absolute;left:265px;top:581px;" width="20" height="20" viewBox="0 0 20 20"><path d="M8 1v14M1 8h14" stroke="#bdbdbd" stroke-width="2.4"/><path d="M12 15h8l-4 4Z" fill="#bdbdbd"/></svg>
<div style="left:65px;top:663px;width:483px;height:27px;background:#0f2a40;"></div>
<svg style="position:absolute;left:118px;top:617px;" width="13" height="9" viewBox="0 0 13 9"><path d="M1 1.5l5.5 5.5 5.5-5.5" stroke="#a0a0a0" stroke-width="1.6" fill="none"/></svg>
<svg style="position:absolute;left:145px;top:615px;" width="14" height="15" viewBox="0 0 14 15"><path d="M1 1l13 6.5L1 14Z" fill="#4aa74e"/></svg>
<div class="t" style="left:165px;top:611.00px;font-size:18.23px;line-height:24px;color:#bcbcbc;font-family:'Liberation Mono', monospace;">Running</div>
<svg style="position:absolute;left:165px;top:640px;" width="18" height="18" viewBox="0 0 18 18"><path d="M9 3a5 5 0 0 1 5 5v4a5 5 0 0 1-10 0V8a5 5 0 0 1 5-5Z" fill="#4aa74e"/><path d="M4 7L1 5M14 7l3-2M4 11H0M14 11h4M4 15l-3 2M14 15l3 2M6.5 3L5 0M11.5 3L13 0" stroke="#4aa74e" stroke-width="1.6"/><path d="M5 9h8M5 12h8" stroke="#3c3c3c" stroke-width="1.2"/></svg>
<div class="t" style="left:189px;top:638.00px;font-size:18.23px;line-height:24px;color:#cfcfcf;font-family:'Liberation Mono', monospace;font-weight:bold;">iDemoLandingPage</div>
<div class="t" style="left:376px;top:638.00px;font-size:18.23px;line-height:24px;color:#7a7b7d;font-family:'Liberation Mono', monospace;">[devtools]</div>
<svg style="position:absolute;left:72px;top:671px;" width="13" height="9" viewBox="0 0 13 9"><path d="M1 1.5l5.5 5.5 5.5-5.5" stroke="#b0b0b0" stroke-width="1.6" fill="none"/></svg>
<svg style="position:absolute;left:96px;top:666px;" width="22" height="20" viewBox="0 0 22 20"><rect x="6" y="2" width="5" height="5" fill="#2496ed"/><path d="M1 9h15c1-2 3-2 5-1-1 1-2 2-3 2-1 5-6 8-11 8-3 0-6-3-6-9Z" fill="#2496ed"/><circle cx="6" cy="13" r="1" fill="#e6f3ff"/></svg>
<div class="t" style="left:119px;top:665.00px;font-size:18.23px;line-height:24px;color:#c8c8c8;font-family:'Liberation Mono', monospace;">Docker</div>
<svg style="position:absolute;left:96px;top:698px;" width="13" height="9" viewBox="0 0 13 9"><path d="M1 1.5l5.5 5.5 5.5-5.5" stroke="#a0a0a0" stroke-width="1.6" fill="none"/></svg>
<svg style="position:absolute;left:118px;top:693px;" width="22" height="20" viewBox="0 0 22 20"><rect x="6" y="2" width="5" height="5" fill="#2496ed"/><path d="M1 9h15c1-2 3-2 5-1-1 1-2 2-3 2-1 5-6 8-11 8-3 0-6-3-6-9Z" fill="#2496ed"/><circle cx="6" cy="13" r="1" fill="#e6f3ff"/><path d="M14 12l7 4-7 4Z" fill="#4aa74e"/></svg>
<div class="t" style="left:142px;top:692.00px;font-size:18.23px;line-height:24px;color:#bcbcbc;font-family:'Liberation Mono', monospace;">Docker</div>
<svg style="position:absolute;left:118px;top:725px;" width="13" height="9" viewBox="0 0 13 9"><path d="M1 1.5l5.5 5.5 5.5-5.5" stroke="#a0a0a0" stroke-width="1.6" fill="none"/></svg>
<svg style="position:absolute;left:143px;top:721px;" width="17" height="18" viewBox="0 0 17 18"><rect x=".5" y=".5" width="16" height="17" fill="none" stroke="#7a7e82"/><rect x="3" y="3" width="5" height="5" fill="#3592c4"/><rect x="9" y="3" width="5" height="5" fill="#3592c4"/><rect x="3" y="10" width="5" height="5" fill="#3592c4"/><rect x="9" y="10" width="5" height="5" fill="#3592c4"/></svg>
<div class="t" style="left:165px;top:719.00px;font-size:18.23px;line-height:24px;color:#bcbcbc;font-family:'Liberation Mono', monospace;">Docker-compose: landingpage</div>
<svg style="position:absolute;left:141px;top:752px;" width="13" height="9" viewBox="0 0 13 9"><path d="M1 1.5l5.5 5.5 5.5-5.5" stroke="#a0a0a0" stroke-width="1.6" fill="none"/></svg>
<svg style="position:absolute;left:163px;top:747px;" width="22" height="20" viewBox="0 0 22 20"><rect x="6" y="2" width="5" height="5" fill="#2496ed"/><path d="M1 9h15c1-2 3-2 5-1-1 1-2 2-3 2-1 5-6 8-11 8-3 0-6-3-6-9Z" fill="#2496ed"/><circle cx="6" cy="13" r="1" fill="#e6f3ff"/></svg>
<div class="t" style="left:189px;top:746.00px;font-size:18.23px;line-height:24px;color:#bcbcbc;font-family:'Liberation Mono', monospace;">landingpage</div>
<svg style="position:absolute;left:189px;top:776px;" width="16" height="16" viewBox="0 0 16 16"><rect width="16" height="16" fill="#3592c4"/></svg>
<div class="t" style="left:212px;top:773.00px;font-size:18.23px;line-height:24px;color:#bcbcbc;font-family:'Liberation Mono', monospace;">landingpage</div>
<svg style="position:absolute;left:166px;top:802px;" width="17" height="18" viewBox="0 0 17 18"><path d="M3 15L8 5h4" stroke="#3592c4" stroke-width="1.8" fill="none"/><rect x="1" y="12" width="5" height="5" fill="#3592c4"/><rect x="7" y="2" width="5" height="5" fill="#3592c4"/><rect x="12" y="12" width="5" height="5" fill="#9aa4ad"/></svg>
<div class="t" style="left:189px;top:800.00px;font-size:18.23px;line-height:24px;color:#bcbcbc;font-family:'Liberation Mono', monospace;">landingpage_default</div>
<svg style="position:absolute;left:120px;top:832px;" width="9" height="12" viewBox="0 0 9 12"><path d="M1.5 1l5.5 5-5.5 5" stroke="#a0a0a0" stroke-width="1.6" fill="none"/></svg>
<svg style="position:absolute;left:143px;top:830px;" width="16" height="16" viewBox="0 0 16 16"><rect x="1" y="1" width="4" height="4" fill="#3592c4"/><rect x="1" y="6" width="4" height="4" fill="#3592c4"/><rect x="1" y="11" width="4" height="4" fill="#3592c4"/><rect x="6" y="1" width="4" height="4" fill="#3592c4"/><rect x="6" y="6" width="4" height="4" fill="#3592c4"/><rect x="6" y="11" width="4" height="4" fill="#3592c4"/><rect x="11" y="1" width="4" height="4" fill="#3592c4"/><rect x="11" y="6" width="4" height="4" fill="#3592c4"/><rect x="11" y="11" width="4" height="4" fill="#3592c4"/></svg>
<div class="t" style="left:165px;top:827.00px;font-size:18.23px;line-height:24px;color:#bcbcbc;font-family:'Liberation Mono', monospace;">Containers</div>
<svg style="position:absolute;left:118px;top:860px;" width="13" height="9" viewBox="0 0 13 9"><path d="M1 1.5l5.5 5.5 5.5-5.5" stroke="#a0a0a0" stroke-width="1.6" fill="none"/></svg>
<svg style="position:absolute;left:143px;top:857px;" width="16" height="16" viewBox="0 0 16 16"><rect x="1.5" y="1.5" width="3.2" height="3.2" fill="none" stroke="#8a9095" stroke-width="1"/><rect x="1.5" y="6.5" width="3.2" height="3.2" fill="none" stroke="#8a9095" stroke-width="1"/><rect x="1.5" y="11.5" width="3.2" height="3.2" fill="none" stroke="#8a9095" stroke-width="1"/><rect x="6.5" y="1.5" width="3.2" height="3.2" fill="none" stroke="#8a9095" stroke-width="1"/><rect x="6.5" y="6.5" width="3.2" height="3.2" fill="none" stroke="#8a9095" stroke-width="1"/><rect x="6.5" y="11.5" width="3.2" height="3.2" fill="none" stroke="#8a9095" stroke-width="1"/><rect x="11.5" y="1.5" width="3.2" height="3.2" fill="none" stroke="#8a9095" stroke-width="1"/><rect x="11.5" y="6.5" width="3.2" height="3.2" fill="none" stroke="#8a9095" stroke-width="1"/><rect x="11.5" y="11.5" width="3.2" height="3.2" fill="none" stroke="#8a9095" stroke-width="1"/></svg>
<div class="t" style="left:165px;top:854.00px;font-size:18.23px;line-height:24px;color:#bcbcbc;font-family:'Liberation Mono', monospace;">Images</div>
<svg style="position:absolute;left:166px;top:884px;" width="16" height="16" viewBox="0 0 16 16"><rect x="1" y="1" width="14" height="14" fill="none" stroke="#a9a9a9" stroke-width="2"/></svg>
<div class="t" style="left:189px;top:881.00px;font-size:18.23px;line-height:24px;color:#bcbcbc;font-family:'Liberation Mono', monospace;">jgsoftwares/jgsoftwares:linuxgraal</div>
<svg style="position:absolute;left:166px;top:911px;" width="16" height="16" viewBox="0 0 16 16"><rect x="1" y="1" width="14" height="14" fill="none" stroke="#a9a9a9" stroke-width="2"/></svg>
<div class="t" style="left:189px;top:908.00px;font-size:18.23px;line-height:24px;color:#bcbcbc;font-family:'Liberation Mono', monospace;">testlandingpage:latest</div>
<div style="left:65px;top:907px;width:420px;height:11px;background:rgba(150,150,150,0.45);"></div>
<div style="left:548px;top:640px;width:10px;height:120px;background:rgba(140,140,140,0.45);border-radius:5px;"></div>
<div style="left:562px;top:573px;width:1284px;height:346px;background:#454547;"></div>
<div class="t" style="left:1039px;top:681.00px;font-size:18.23px;line-height:24px;color:#8a8a8a;font-family:'Liberation Mono', monospace;transform:scaleX(1.0024);transform-origin:0 0;">Select service to view details</div>
<div style="left:0px;top:918px;width:1874px;height:27px;background:#3d3f41;"></div>
<div style="left:0px;top:918px;width:1874px;height:1px;background:#38393b;"></div>
<div style="left:641px;top:919px;width:119px;height:26px;background:#303234;"></div>
<svg style="position:absolute;left:40px;top:925px;" width="11" height="15" viewBox="0 0 11 15"><circle cx="2.5" cy="12.5" r="2" fill="#bdbdbd"/><path d="M2.5 1v11M2.5 10c0-4 7-2 7-8" stroke="#bdbdbd" stroke-width="2" fill="none"/><circle cx="9" cy="2.5" r="2" fill="#bdbdbd"/></svg>
<div class="t" style="left:58px;top:924.50px;font-size:14.8px;line-height:19px;color:#bdbdbd;font-family:'Liberation Mono', monospace;transform:scaleX(0.9757);transform-origin:0 0;">Git</div>
<svg style="position:absolute;left:109px;top:926px;" width="13" height="13" viewBox="0 0 13 13"><rect x="0" y="0.0" width="2.5" height="2.5" fill="#bdbdbd"/><rect x="4" y="0.0" width="9" height="2.5" fill="#bdbdbd"/><rect x="0" y="4.5" width="2.5" height="2.5" fill="#bdbdbd"/><rect x="4" y="4.5" width="9" height="2.5" fill="#bdbdbd"/><rect x="0" y="9.0" width="2.5" height="2.5" fill="#bdbdbd"/><rect x="4" y="9.0" width="9" height="2.5" fill="#bdbdbd"/></svg>
<div class="t" style="left:127px;top:924.50px;font-size:14.8px;line-height:19px;color:#bdbdbd;font-family:'Liberation Mono', monospace;transform:scaleX(1.0132);transform-origin:0 0;">TODO</div>
<svg style="position:absolute;left:189px;top:925px;" width="13" height="14" viewBox="0 0 13 14"><circle cx="6.5" cy="7" r="6.5" fill="#bdbdbd"/><rect x="5.3" y="2.5" width="2.4" height="6" fill="#424345"/><rect x="5.3" y="9.5" width="2.4" height="2.3" fill="#424345"/></svg>
<div class="t" style="left:208px;top:924.50px;font-size:14.8px;line-height:19px;color:#bdbdbd;font-family:'Liberation Mono', monospace;transform:scaleX(0.9992);transform-origin:0 0;">Problems</div>
<svg style="position:absolute;left:307px;top:925px;" width="15" height="14" viewBox="0 0 15 14"><path d="M1 13c0-7 5-12 13-12 0 8-5 12-13 12Z" fill="#9a9a9a"/></svg>
<div class="t" style="left:326px;top:924.50px;font-size:14.8px;line-height:19px;color:#bdbdbd;font-family:'Liberation Mono', monospace;transform:scaleX(1.0132);transform-origin:0 0;">Spring</div>
<svg style="position:absolute;left:407px;top:924px;" width="14" height="15" viewBox="0 0 14 15"><rect width="14" height="15" fill="#bdbdbd"/><path d="M3 4l3 3-3 3" stroke="#424345" stroke-width="1.4" fill="none"/><path d="M7 11h5" stroke="#424345" stroke-width="1.4"/></svg>
<div class="t" style="left:427px;top:924.50px;font-size:14.8px;line-height:19px;color:#bdbdbd;font-family:'Liberation Mono', monospace;transform:scaleX(0.9851);transform-origin:0 0;">Terminal</div>
<svg style="position:absolute;left:526px;top:923px;" width="17" height="18" viewBox="0 0 17 18"><circle cx="9" cy="3" r="2.5" fill="#bdbdbd"/><circle cx="3" cy="15" r="2.5" fill="#bdbdbd"/><circle cx="14" cy="15" r="2.5" fill="#bdbdbd"/><path d="M9 3L3 15M9 3l5 12" stroke="#bdbdbd" stroke-width="1.8"/></svg>
<div class="t" style="left:545px;top:924.50px;font-size:14.8px;line-height:19px;color:#bdbdbd;font-family:'Liberation Mono', monospace;transform:scaleX(1.0132);transform-origin:0 0;">Endpoints</div>
<svg style="position:absolute;left:654px;top:923px;" width="17" height="18" viewBox="0 0 17 18"><path d="M8.5 1l7.5 4v8l-7.5 4L1 13V5Z" fill="#9b9b9b"/><path d="M6 5.5l6 3.5-6 3.5Z" fill="#2f3133"/><circle cx="14" cy="15.5" r="2.5" fill="#2ad03f"/></svg>
<div class="t" style="left:674px;top:924.50px;font-size:14.8px;line-height:19px;color:#e2e2e2;font-family:'Liberation Mono', monospace;transform:scaleX(0.9992);transform-origin:0 0;">Services</div>
<svg style="position:absolute;left:772px;top:923px;" width="18" height="18" viewBox="0 0 18 18"><circle cx="7.5" cy="7.5" r="6" stroke="#bdbdbd" stroke-width="1.8" fill="none"/><path d="M7.5 4v4l2 1.5" stroke="#bdbdbd" stroke-width="1.4" fill="none"/><path d="M9 9l8 4-8 4Z" fill="#bdbdbd"/></svg>
<div class="t" style="left:793px;top:924.50px;font-size:14.8px;line-height:19px;color:#bdbdbd;font-family:'Liberation Mono', monospace;transform:scaleX(0.9992);transform-origin:0 0;">Profiler</div>
<svg style="position:absolute;left:891px;top:924px;" width="16" height="16" viewBox="0 0 16 16"><path d="M1 4l5-3 2 2-2 1 9 9-2 2-9-9-1 1Z" fill="#bdbdbd"/></svg>
<div class="t" style="left:911px;top:924.50px;font-size:14.8px;line-height:19px;color:#bdbdbd;font-family:'Liberation Mono', monospace;transform:scaleX(1.0132);transform-origin:0 0;">Build</div>
<svg style="position:absolute;left:983px;top:923px;" width="17" height="18" viewBox="0 0 17 18"><path d="M8.5 1l7.5 4-7.5 4L1 5Z" fill="#bdbdbd"/><path d="M1 9l7.5 4L16 9M1 13l7.5 4 7.5-4" stroke="#bdbdbd" stroke-width="1.6" fill="none"/></svg>
<div class="t" style="left:1003px;top:924.50px;font-size:14.8px;line-height:19px;color:#bdbdbd;font-family:'Liberation Mono', monospace;transform:scaleX(1.0039);transform-origin:0 0;">Dependencies</div>
<div style="left:0px;top:944px;width:1874px;height:28px;background:#444547;"></div>
<div style="left:0px;top:944px;width:1874px;height:1px;background:#36373a;"></div>
<svg style="position:absolute;left:7px;top:950px;" width="16" height="16" viewBox="0 0 16 16"><rect x="4" y="1" width="11" height="11" fill="none" stroke="#9a9a9a" stroke-width="1.4"/><path d="M1 4v11h11" stroke="#9a9a9a" stroke-width="1.4" fill="none"/></svg>
<div class="t" style="left:34px;top:947.00px;font-size:18.23px;line-height:24px;color:#bcbcbc;font-family:'Liberation Mono', monospace;transform:scaleX(0.9998);transform-origin:0 0;">Pushed 1 commit to origin/master (10 minutes ago)</div>
<svg style="position:absolute;left:1210px;top:947px;" width="22" height="22" viewBox="0 0 22 22"><path d="M4 15a4 4 0 0 1 1-8 6 6 0 0 1 11 1 3.5 3.5 0 0 1 0 7Z" fill="#bdbdbd"/><text x="7" y="13" font-family="Liberation Sans" font-size="9" font-weight="bold" fill="#434446">?</text><circle cx="16" cy="17" r="3.6" fill="#bdbdbd" stroke="#434446" stroke-width="1"/><circle cx="16" cy="17" r="1.4" fill="#434446"/></svg>
<div class="t" style="left:1244px;top:947.00px;font-size:18.23px;line-height:24px;color:#bcbcbc;font-family:'Liberation Mono', monospace;transform:scaleX(0.9826);transform-origin:0 0;">8:32</div>
<div class="t" style="left:1304px;top:947.00px;font-size:18.23px;line-height:24px;color:#bcbcbc;font-family:'Liberation Mono', monospace;transform:scaleX(1.0054);transform-origin:0 0;">LF</div>
<div class="t" style="left:1342px;top:947.00px;font-size:18.23px;line-height:24px;color:#bcbcbc;font-family:'Liberation Mono', monospace;transform:scaleX(0.9963);transform-origin:0 0;">ISO-8859-1</div>
<div class="t" style="left:1468px;top:947.00px;font-size:18.23px;line-height:24px;color:#bcbcbc;font-family:'Liberation Mono', monospace;transform:scaleX(0.9940);transform-origin:0 0;">2 spaces</div>
<div class="t" style="left:1571px;top:947.00px;font-size:18.23px;line-height:24px;color:#bcbcbc;font-family:'Liberation Mono', monospace;transform:scaleX(1.0054);transform-origin:0 0;">No JSON schema</div>
<svg style="position:absolute;left:1744px;top:950px;" width="14" height="17" viewBox="0 0 14 17"><circle cx="3" cy="14" r="2.2" fill="#bdbdbd"/><path d="M3 1v12M3 11c0-4 8-3 8-8" stroke="#bdbdbd" stroke-width="2.2" fill="none"/><circle cx="11" cy="3" r="2.2" fill="#bdbdbd"/></svg>
<div class="t" style="left:1762px;top:947.00px;font-size:18.23px;line-height:24px;color:#bcbcbc;font-family:'Liberation Mono', monospace;transform:scaleX(1.0206);transform-origin:0 0;">master</div>
<svg style="position:absolute;left:1841px;top:950px;" width="16" height="16" viewBox="0 0 16 16"><path d="M3 7V4a3 3 0 0 1 6 0" stroke="#bdbdbd" stroke-width="1.8" fill="none"/><rect x="5" y="7" width="11" height="8" fill="#bdbdbd"/></svg>
<svg style="position:absolute;left:840px;top:260px;filter:blur(1px);" width="400" height="520" viewBox="0 0 400 520"><g fill="rgba(0,0,0,0.13)" transform="translate(-840,-260)">
<path d="M1092 276 C1108 330 1060 362 1020 402 C985 440 972 472 998 507 C1013 527 1033 542 1045 550 C1033 530 1013 505 1008 475 C1003 440 1042 402 1077 362 C1102 332 1108 302 1092 276Z"/>
<path d="M1146 376 C1100 394 1053 420 1043 455 C1037 482 1058 507 1090 542 C1077 512 1066 486 1070 460 C1078 430 1110 400 1146 376Z"/>
<path d="M973 546 C920 552 893 565 903 576 C915 592 1040 592 1140 565 C1060 578 950 580 933 570 C923 562 945 552 973 546Z"/>
<path d="M1159 542 C1228 555 1238 602 1145 633 C1197 605 1207 570 1159 542Z"/>
<path d="M957 605 C928 613 930 634 990 638 C1045 642 1100 633 1123 622 C1060 624 985 626 965 617 C955 612 954 608 957 605Z"/>
<path d="M970 655 C943 665 948 691 1010 693 C1060 694 1100 685 1115 675 C1060 676 1000 678 982 668 C973 662 970 658 970 655Z"/>
<path d="M932 692 C858 700 843 726 900 736 C980 749 1130 741 1198 705 C1140 722 980 730 913 718 C883 710 895 698 932 692Z"/>
<path d="M929 753 C1000 771 1150 766 1220 719 C1160 751 1020 761 929 753Z"/>
</g></svg>
<div style="left:1127px;top:45px;width:226px;height:76px;background:#5d7cba;border-radius:2px;box-shadow:0 2px 6px rgba(0,0,0,0.45);"></div>
<div style="left:1129.5px;top:47.5px;width:221px;height:71px;background:#5f83c6;border:1px solid #26478a;"></div>
<div style="left:1132px;top:50px;width:216px;height:21.5px;background:linear-gradient(#c6d8ee,#b3cae6);"></div>
<div style="left:1132px;top:71.5px;width:216px;height:44.5px;background:#efefef;"></div>
<svg style="position:absolute;left:1137px;top:53px;" width="16" height="16" viewBox="0 0 16 16"><rect x="1" y="1" width="14" height="14" rx="1.5" fill="#fafafa" stroke="#6c7a88" stroke-width="1.6"/><path d="M1 4.5h14" stroke="#6c7a88" stroke-width="1.3"/></svg>
<div class="t" style="left:1158px;top:51.50px;font-size:14.5px;line-height:19px;color:#1f2a36;font-family:'Liberation Sans', sans-serif;font-weight:bold;transform:scaleX(1.0134);transform-origin:0 0;">Krut Computer ...</div>
<svg style="position:absolute;left:1284px;top:53px;" width="14" height="14" viewBox="0 0 14 14"><rect x="1" y="8" width="5" height="5" fill="none" stroke="#1f2a36" stroke-width="1.4"/><path d="M13 1L8 6M8 2.5V6h3.5" stroke="#1f2a36" stroke-width="1.2" fill="none"/></svg>
<svg style="position:absolute;left:1303px;top:53px;" width="15" height="15" viewBox="0 0 15 15"><rect x="1" y="5" width="9" height="9" fill="none" stroke="#1f2a36" stroke-width="1.4"/><path d="M4 11l9-9M9 2h4v4" stroke="#1f2a36" stroke-width="1.2" fill="none"/></svg>
<svg style="position:absolute;left:1329px;top:54px;" width="15" height="15" viewBox="0 0 15 15"><rect x="1" y="1" width="13" height="13" fill="none" stroke="#1f2a36" stroke-width="1.4"/><path d="M3 3l9 9M12 3l-9 9" stroke="#1f2a36" stroke-width="1.2"/></svg>
<div style="left:1137px;top:77px;width:51px;height:31px;background:linear-gradient(#fafafa,#e2e2e2);border-radius:2px;"></div>
<div class="t" style="left:1143px;top:82.50px;font-size:14.5px;line-height:19px;color:#222;font-family:'Liberation Sans', sans-serif;font-weight:bold;transform:scaleX(1.0303);transform-origin:0 0;"><u>M</u>enu</div>
<div style="left:1190px;top:78px;width:60px;height:27px;background:#f2f2f2;border:1px solid #a8a8a8;"></div>
<svg style="position:absolute;left:1194px;top:84px;" width="16" height="16" viewBox="0 0 16 16"><circle cx="8" cy="8" r="7.5" fill="#d9472f"/><path d="M4 4l8 8M12 4l-8 8" stroke="#fff" stroke-width="2.2"/></svg>
<div class="t" style="left:1213px;top:82.50px;font-size:14.5px;line-height:19px;color:#222;font-family:'Liberation Sans', sans-serif;font-weight:bold;transform:scaleX(1.0244);transform-origin:0 0;">Stop</div>
<div style="left:1251px;top:78px;width:71px;height:27px;background:#b9cde6;border:1px solid #8ea2bb;"></div>
<svg style="position:absolute;left:1257px;top:84px;" width="15" height="15" viewBox="0 0 15 15"><rect x=".5" y=".5" width="14" height="14" fill="#2f6fd6" stroke="#1d4ea8"/><path d="M3 3l3 3M12 3l-3 3M3 12l3-3M12 12l-3-3" stroke="#fff" stroke-width="1.4"/></svg>
<div class="t" style="left:1281px;top:82.50px;font-size:14.5px;line-height:19px;color:#222;font-family:'Liberation Sans', sans-serif;font-weight:bold;transform:scaleX(1.0156);transform-origin:0 0;">Snap</div>
<div style="left:1322px;top:78px;width:19px;height:27px;background:#f2f2f2;border:1px solid #b5b5b5;"></div>
<svg style="position:absolute;left:1326px;top:84px;" width="11" height="15" viewBox="0 0 11 15"><path d="M1 1v11l3-3 2.5 5 2-1-2.5-5h4Z" fill="#fafafa" stroke="#777" stroke-width="1"/></svg>
<div style="left:1136px;top:110px;width:208px;height:1px;background:#d6d6d6;"></div>
</body></html>
